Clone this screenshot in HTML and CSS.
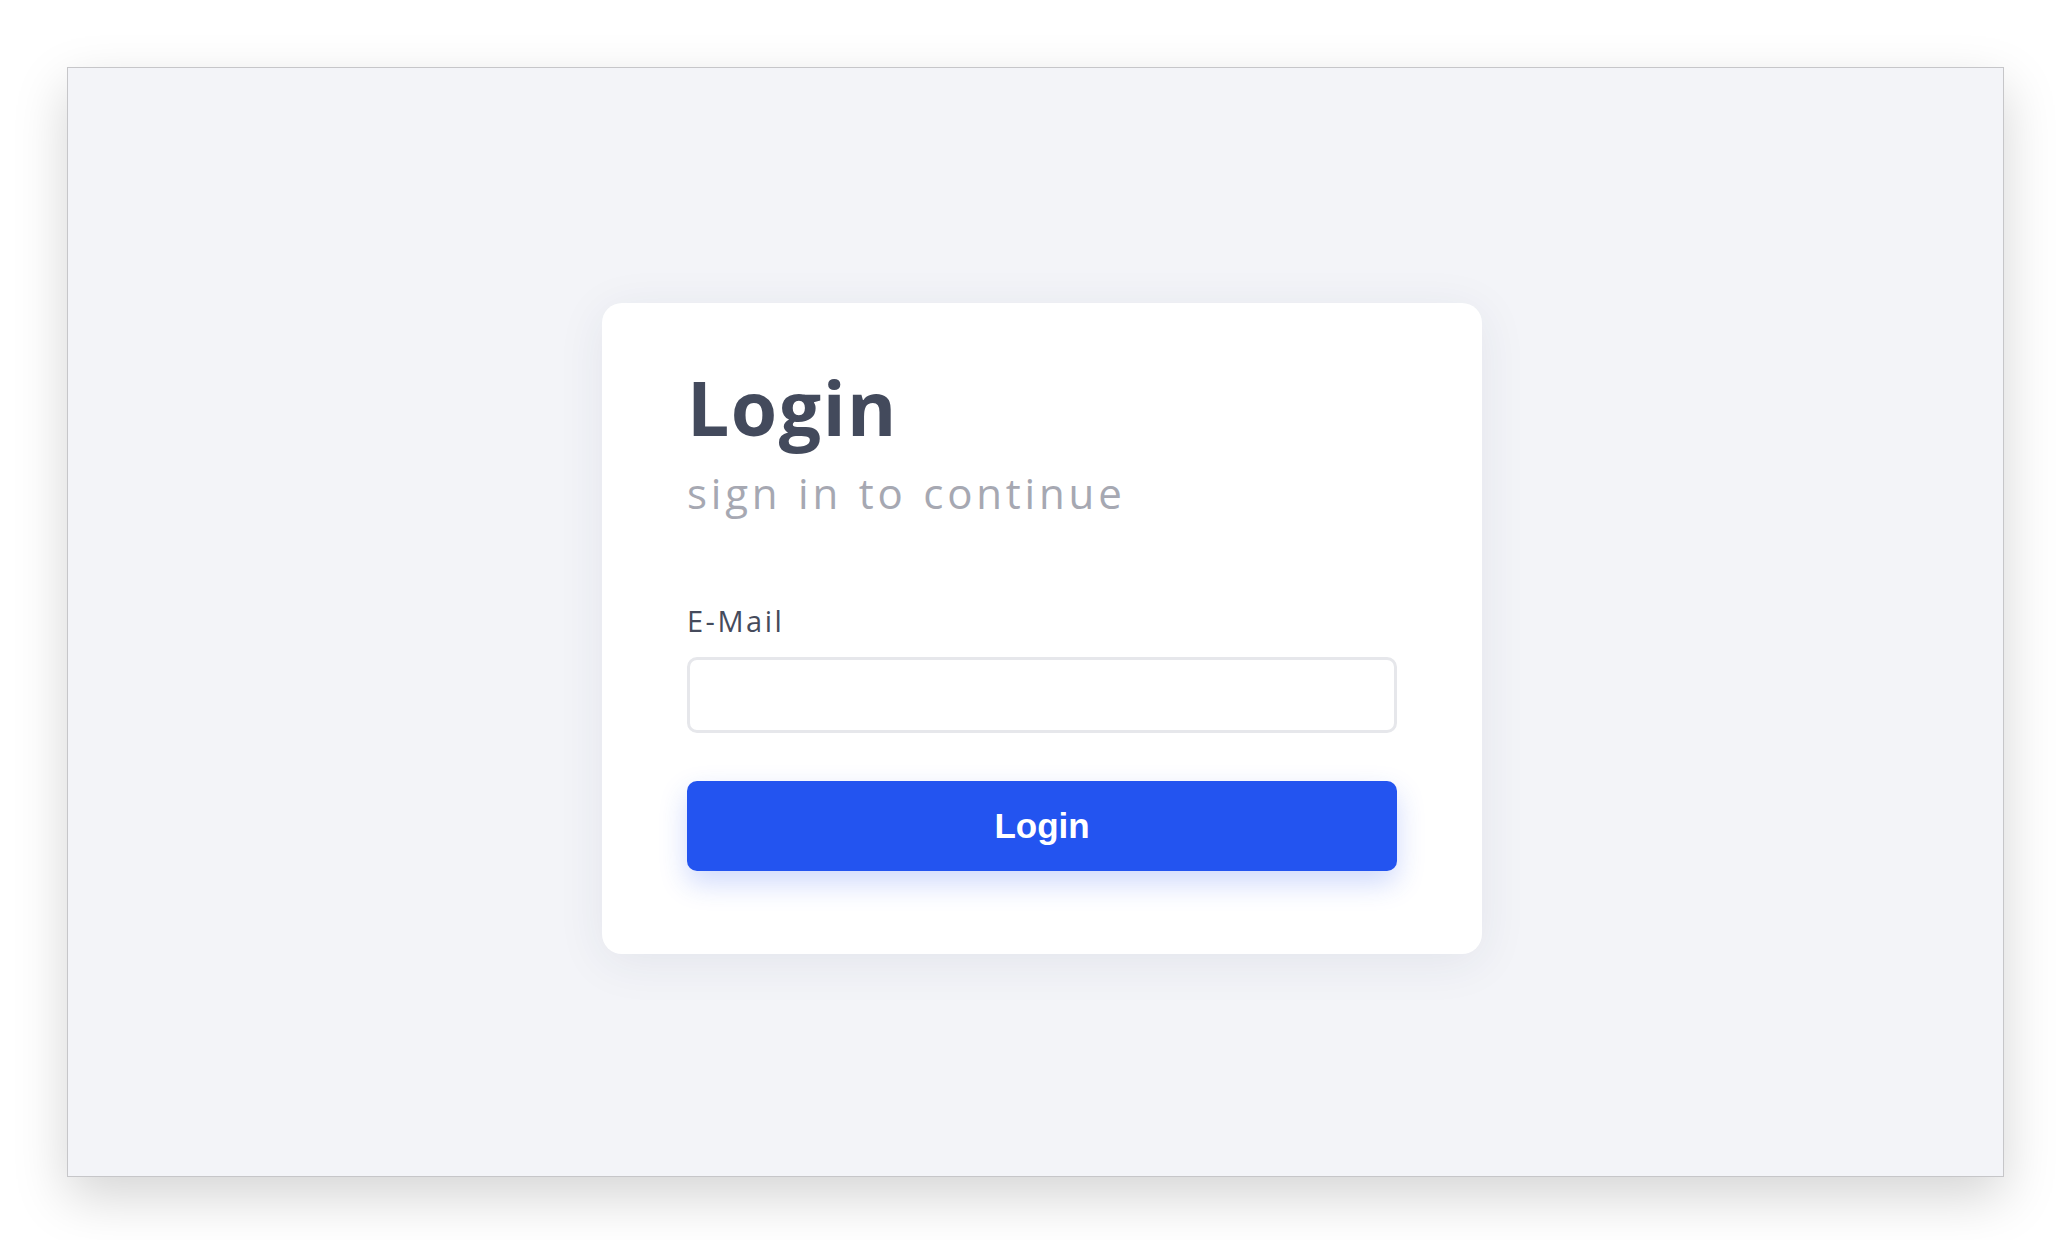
FILE: index.html
```html
<!DOCTYPE html>
<html lang="en">
<head>
<meta charset="utf-8">
<title>Login</title>
<link rel="stylesheet" href="styles.css">
</head>
<body>
<div class="frame">
  <form class="card" onsubmit="return false;">
    <h1 class="title">Login</h1>
    <p class="subtitle">sign in to continue</p>
    <label class="label" for="email">E-Mail</label>
    <input class="input" id="email" type="email">
    <button class="btn" type="submit">Login</button>
  </form>
</div>
</body>
</html>
```
FILE: styles.css
```css
html, body {
  margin: 0;
  padding: 0;
  background: #ffffff;
}
body {
  font-family: "Open Sans", "Noto Sans", sans-serif;
  min-height: 1240px;
}
.frame {
  box-sizing: border-box;
  width: 1937px;
  height: 1110px;
  margin: 67px 0 0 67px;
  background: #f3f4f8;
  border: 1px solid #c6c6c9;
  box-shadow: 0 20px 50px rgba(0, 0, 0, 0.17);
  display: flex;
  align-items: center;
  justify-content: center;
  padding: 13px 0 0 13px;
}
.card {
  box-sizing: border-box;
  width: 880px;
  background: #ffffff;
  border-radius: 20px;
  box-shadow: 0 8px 48px rgba(40, 50, 90, 0.08);
  padding: 64px 85px 83px;
  display: flex;
  flex-direction: column;
}
.title {
  margin: 0;
  font-size: 75px;
  line-height: 80px;
  font-weight: 700;
  color: #434a5c;
  letter-spacing: 1.5px;
}
.subtitle {
  margin: 24px 0 0;
  font-size: 42px;
  line-height: 44px;
  color: #a6a8b2;
  letter-spacing: 3.8px;
  word-spacing: 2px;
}
.label {
  margin-top: 88px;
  font-size: 29px;
  line-height: 36px;
  color: #454b5c;
  letter-spacing: 2.5px;
}
.input {
  box-sizing: border-box;
  margin-top: 18px;
  height: 76px;
  width: 100%;
  border: 3px solid #e6e7eb;
  border-radius: 10px;
  background: #ffffff;
  outline: none;
  font-size: 26px;
  padding: 0 20px;
}
.btn {
  margin-top: 48px;
  height: 90px;
  width: 100%;
  border: none;
  border-radius: 10px;
  background: #2354f0;
  color: #ffffff;
  font-family: "Liberation Sans", Arial, sans-serif;
  font-weight: 700;
  font-size: 35px;
  box-shadow: 0 12px 28px rgba(35, 84, 240, 0.22);
  cursor: pointer;
}
```
